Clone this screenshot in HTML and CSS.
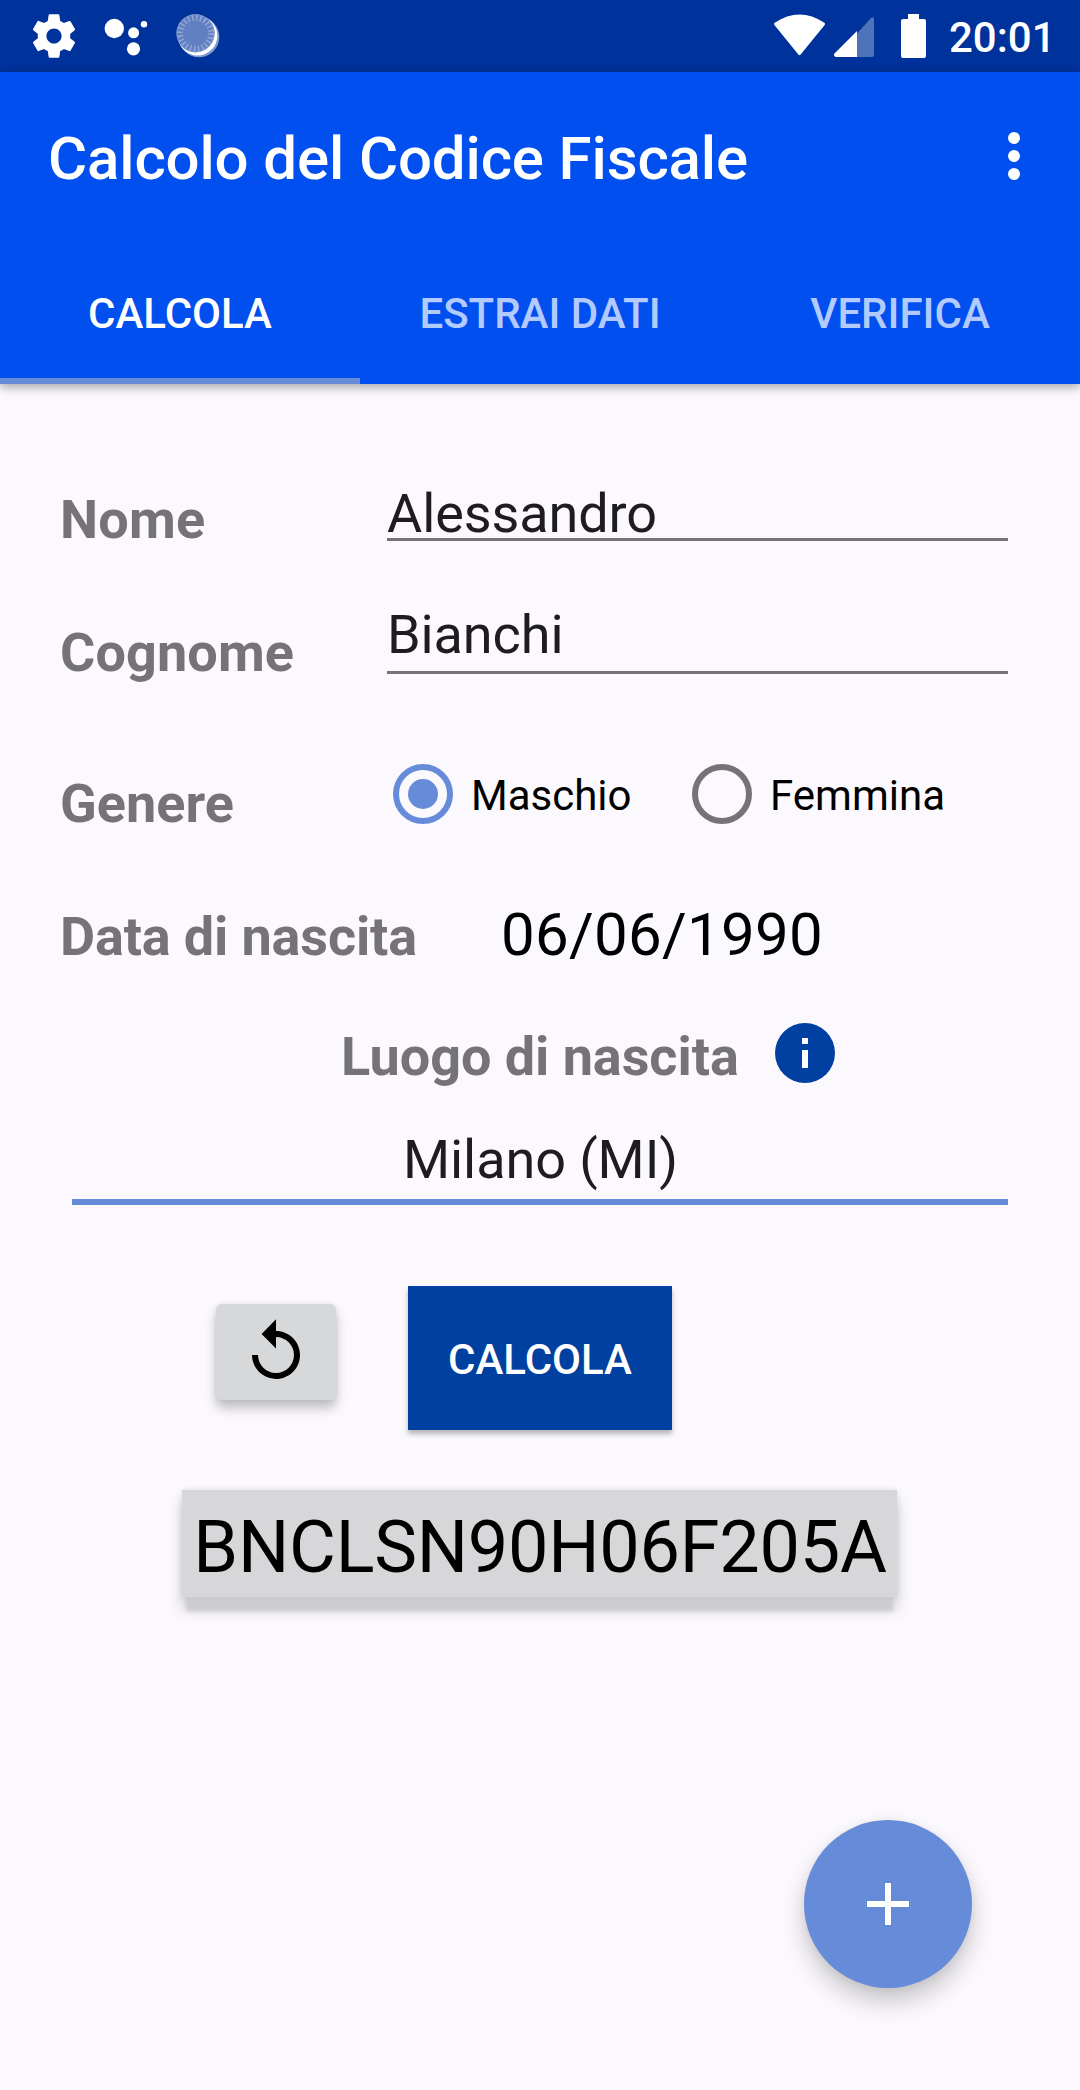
FILE: index.html
```html
<!DOCTYPE html>
<html lang="it">
<head>
<meta charset="utf-8">
<title>Calcolo del Codice Fiscale</title>
<link rel="stylesheet" href="styles.css">
</head>
<body>
<div class="screen">
  <div class="status-bar">
    <svg class="status-left" width="240" height="72" viewBox="0 0 240 72">
      <g transform="translate(28 10) scale(2.167)"><path fill="#fff" d="M19.43 12.98c.04-.32.07-.64.07-.98s-.03-.66-.07-.98l2.11-1.65c.19-.15.24-.42.12-.64l-2-3.46c-.12-.22-.39-.3-.61-.22l-2.49 1c-.52-.4-1.08-.73-1.69-.98l-.38-2.65C14.46 2.18 14.25 2 14 2h-4c-.25 0-.46.18-.49.42l-.38 2.65c-.61.25-1.17.59-1.69.98l-2.49-1c-.23-.09-.49 0-.61.22l-2 3.46c-.13.22-.07.49.12.64l2.11 1.65c-.04.32-.07.65-.07.98s.03.66.07.98l-2.11 1.65c-.19.15-.24.42-.12.64l2 3.46c.12.22.39.3.61.22l2.49-1c.52.4 1.08.73 1.69.98l.38 2.65c.03.24.24.42.49.42h4c.25 0 .46-.18.49-.42l.38-2.65c.61-.25 1.17-.59 1.69-.98l2.49 1c.23.09.49 0 .61-.22l2-3.46c.12-.22.07-.49-.12-.64l-2.11-1.65zM12 15.5c-1.93 0-3.5-1.57-3.5-3.5s1.57-3.5 3.5-3.5 3.5 1.57 3.5 3.5-1.57 3.5-3.5 3.5z"/></g>
      <g fill="#fff">
        <circle cx="114.3" cy="28.5" r="9.7"/>
        <circle cx="133.6" cy="32.8" r="5.5"/>
        <circle cx="144" cy="24.3" r="3.2"/>
        <circle cx="133.5" cy="48.8" r="6.6"/>
      </g>
      <circle cx="199" cy="37" r="20.3" fill="#7f9bd2"/>
      <circle cx="197.6" cy="35.6" r="19.8" fill="#fff"/>
      <circle cx="195.5" cy="33.3" r="19" fill="#6280c1"/>
      <circle cx="195.5" cy="33.3" r="15.5" fill="none" stroke="#92a8d8" stroke-width="6" stroke-dasharray="1.5 2.56"/>
      <circle cx="195.5" cy="33.3" r="18.6" fill="none" stroke="#7f99d0" stroke-width="1"/>
    </svg>
    <div class="status-right">
      <svg width="170" height="72" viewBox="765 0 170 72">
        <path fill="#fff" stroke="#fff" stroke-width="3" stroke-linejoin="round" d="M775.6 24Q799.500 8 823.500 24L799.500 53.600Z"/>
        <path fill="#4f73ba" d="M857 33.500L871 18Q874 16 874 19V55Q874 57 872 57H857Z"/>
        <path fill="#fff" d="M857 31V57H836Q833 56 834.500 53.500Z"/>
        <path fill="#fff" d="M908 14H919V19H924Q926 19 926 21V56Q926 58 924 58H903Q901 58 901 56V21Q901 19 903 19H908Z"/>
      </svg>
      <span class="clock">20:01</span>
    </div>
  </div>

  <header class="app-bar">
    <div class="toolbar">
      <h1 class="title">Calcolo del Codice Fiscale</h1>
      <svg width="12" height="48" viewBox="0 0 12 48" fill="#fff"><circle cx="6" cy="6" r="6"/><circle cx="6" cy="24" r="6"/><circle cx="6" cy="42" r="6"/></svg>
    </div>
    <nav class="tabs">
      <a class="tab tab-active">CALCOLA</a>
      <a class="tab">ESTRAI DATI</a>
      <a class="tab">VERIFICA</a>
    </nav>
  </header>

  <main class="form">
    <div class="row row-first-name">
      <span class="label">Nome</span>
      <div class="field">Alessandro</div>
    </div>
    <div class="row row-last-name">
      <span class="label">Cognome</span>
      <div class="field">Bianchi</div>
    </div>
    <div class="row row-gender">
      <span class="label">Genere</span>
      <div class="radios">
        <div class="radio radio-on"><i class="ring"></i><span>Maschio</span></div>
        <div class="radio"><i class="ring"></i><span>Femmina</span></div>
      </div>
    </div>
    <div class="row-birth-date">
      <span class="label">Data di nascita</span>
      <span class="date">06/06/1990</span>
    </div>
    <div class="row-birth-place">
      <span class="label">Luogo di nascita</span>
      <svg width="72" height="72" viewBox="0 0 24 24"><circle cx="12" cy="12" r="10" fill="#0040a1"/><path fill="#fff" d="M11 7h2v2h-2zM11 11h2v6h-2z"/></svg>
    </div>
    <div class="place">Milano (MI)</div>
    <div class="actions">
      <div class="reset">
        <svg width="72" height="72" viewBox="0 0 24 24"><path d="M12 5V1.100L7.200 6l4.800 4.800V7c3.310 0 6 2.690 6 6s-2.690 6-6 6-6-2.690-6-6H4c0 4.420 3.580 8 8 8s8-3.580 8-8-3.580-8-8-8z"/></svg>
      </div>
      <div class="calculate">CALCOLA</div>
    </div>
    <div class="code">BNCLSN90H06F205A</div>
  </main>

  <div class="fab">
    <svg width="42" height="42" viewBox="0 0 42 42"><path fill="#fff" d="M18 0h6v18h18v6H24v18h-6V24H0v-6h18z"/></svg>
  </div>
</div>
</body>
</html>
```
FILE: styles.css
```css
* { box-sizing: border-box; }

body {
  margin: 0;
  background: #fbf9fd;
  font-family: Roboto, sans-serif;
  color: #000;
}

svg { display: block; flex: none; }

.screen {
  position: relative;
  width: 1080px;
  height: 2090px;
  overflow: hidden;
  white-space: nowrap;
}

.status-bar {
  display: flex;
  justify-content: space-between;
  height: 72px;
  background: #00329c;
}

.status-right {
  display: flex;
  gap: 14px;
  width: 315px;
}

.clock {
  font-size: 42px;
  font-weight: 500;
  line-height: 75px;
  color: #fff;
}

.app-bar {
  height: 312px;
  background: #004fee;
  box-shadow: 0 3px 10px rgba(0, 0, 0, 0.36);
}

.toolbar {
  display: flex;
  align-items: center;
  justify-content: space-between;
  height: 168px;
  padding: 0 60px 0 48px;
}

.title {
  margin: 5px 0 0;
  font-size: 60px;
  font-weight: 500;
  line-height: 72px;
  letter-spacing: -0.14px;
  color: #fff;
}

.tabs {
  display: grid;
  grid-template-columns: repeat(3, 1fr);
  height: 144px;
}

.tab {
  height: 144px;
  border-bottom: 6px solid transparent;
  font-size: 42px;
  font-weight: 500;
  line-height: 147px;
  text-align: center;
  color: #b3caff;
}

.tab-active {
  border-color: #668bd9;
  color: #fff;
}

.form {
  padding: 104px 72px 0 60px;
}

.label {
  font-size: 54px;
  font-weight: 700;
  color: #757377;
}

.row {
  display: grid;
  grid-template-columns: 327px 621px;
  align-items: start;
}

.field {
  height: 53px;
  border-bottom: 3px solid #757377;
  font-size: 54px;
  line-height: 52px;
  letter-spacing: -0.1px;
  color: #1e1c20;
}

.row-first-name {
  height: 62px;
}

.row-first-name .label {
  padding-top: 1px;
  line-height: 61px;
  letter-spacing: 0.2px;
}

.row-last-name {
  margin-top: 51px;
}

.row-last-name .label {
  padding-top: 21px;
  line-height: 62px;
  letter-spacing: 0.1px;
}

.row-last-name .field {
  height: 73px;
  line-height: 68px;
}

.row-gender {
  margin-top: 80px;
}

.row-gender .label {
  padding-top: 9px;
  line-height: 61px;
}

.radios {
  display: grid;
  grid-template-columns: 299px 1fr;
  padding-left: 6px;
}

.radio {
  display: flex;
  gap: 18px;
  font-size: 42px;
  line-height: 63px;
  height: 60px;
}

.ring {
  display: grid;
  place-items: center;
  width: 60px;
  height: 60px;
  border: 6px solid #757377;
  border-radius: 50%;
}

.radio-on .ring { border-color: #668bd9; }

.radio-on .ring::after {
  content: "";
  width: 30px;
  height: 30px;
  border-radius: 50%;
  background: #668bd9;
}

.row-birth-date {
  display: flex;
  align-items: flex-start;
  height: 73px;
  margin-top: 66px;
}

.row-birth-date .label {
  width: 441px;
  line-height: 73px;
  letter-spacing: -0.15px;
}

.date {
  font-size: 60px;
  line-height: 69px;
  letter-spacing: 0.27px;
}

.row-birth-place {
  display: flex;
  align-items: flex-start;
  height: 78px;
  margin-top: 44px;
  padding-left: 281px;
}

.row-birth-place .label {
  width: 428px;
  line-height: 80px;
  letter-spacing: -0.06px;
}

.place {
  height: 82px;
  margin: 28px 0 0 12px;
  padding-left: 1px;
  border-bottom: 6px solid #668bd9;
  font-size: 54px;
  line-height: 74px;
  letter-spacing: -0.08px;
  text-align: center;
  color: #1e1c20;
}

.actions {
  display: flex;
  align-items: flex-start;
  gap: 72px;
  margin-top: 81px;
  padding-left: 156px;
}

.reset {
  display: flex;
  justify-content: center;
  width: 120px;
  height: 96px;
  margin-top: 18px;
  padding-top: 12px;
  border-radius: 6px;
  background: #d7d8da;
  box-shadow: 0 8px 12px rgba(0, 0, 0, 0.24), 0 0 5px rgba(0, 0, 0, 0.08);
}

.calculate {
  width: 264px;
  height: 144px;
  background: #0040a1;
  box-shadow: 0 4px 5px rgba(0, 0, 0, 0.28);
  font-size: 42px;
  font-weight: 500;
  line-height: 147px;
  text-align: center;
  color: #fff;
}

.code {
  width: 715px;
  height: 107px;
  margin: 60px 0 0 122px;
  padding-left: 1px;
  background: #d7d7d9;
  box-shadow: 0 18px 4px -4px #cdcbce, 0 12px 14px rgba(0, 0, 0, 0.18), 0 0 7px rgba(0, 0, 0, 0.1);
  font-size: 72px;
  line-height: 116px;
  letter-spacing: -0.25px;
  text-align: center;
}

.fab {
  position: absolute;
  top: 1820px;
  left: 804px;
  display: grid;
  place-items: center;
  width: 168px;
  height: 168px;
  border-radius: 50%;
  background: #668bd9;
  box-shadow: 0 14px 24px rgba(0, 0, 0, 0.2), 0 2px 8px rgba(0, 0, 0, 0.07);
}
```
